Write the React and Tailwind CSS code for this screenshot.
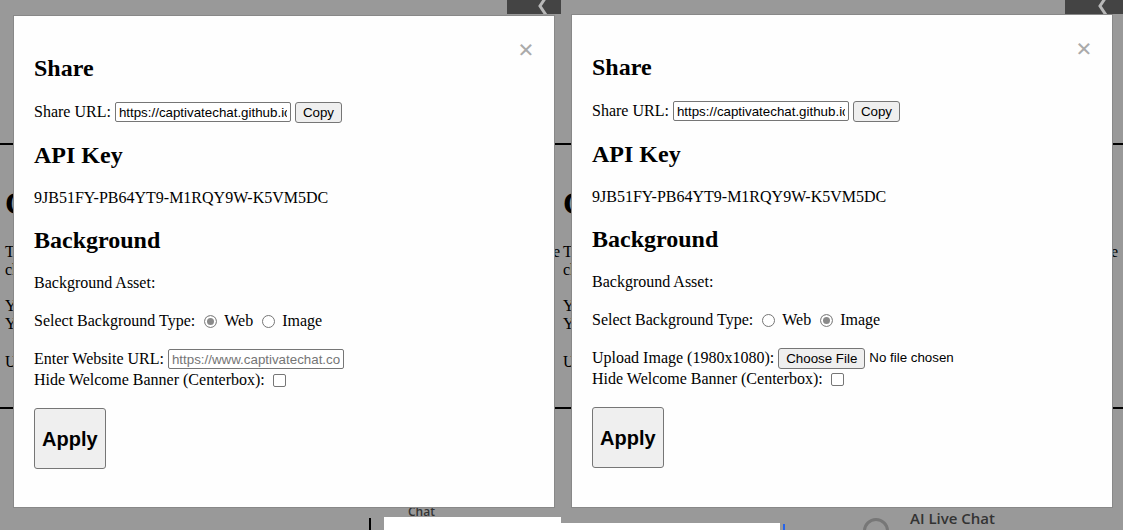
import React from 'react';

const shareUrl = "https://captivatechat.github.io/live-chat?apiKey=9JB51FY-PB64YT9-M1RQY9W-K5VM5DC";

const fieldClass = "h-[20px] w-[176px] shrink-0 rounded-[2px] border border-[#767676] bg-white px-[3px] font-['Liberation_Sans',sans-serif] text-[13.33px] text-black outline-none placeholder:text-[#757575]";
const smallButton = "h-[21px] shrink-0 rounded-[3px] border border-[#767676] bg-[#efefef] px-[7px] font-['Liberation_Sans',sans-serif] text-[13.33px] leading-[15px] text-black";
const radioClass = "h-[13px] w-[13px] shrink-0 appearance-none rounded-full border border-[#767676] bg-white checked:border-[#8a8a8a] checked:bg-[#8a8a8a] checked:shadow-[inset_0_0_0_2px_#fff]";

function Modal({ mode, name, heightClass }) {
  const isImage = mode === 'image';

  return (
    <div className={`${heightClass} w-[542px] border border-[#888] bg-[#fefefe] p-[20px] font-['Liberation_Serif',serif] text-[16px] leading-[18px] text-black`}>
      <span className="float-right cursor-pointer text-[28px] font-bold leading-[28px] text-[#aaa]">×</span>

      <h2 className="mt-[18px] text-[24px] font-bold leading-[28px]">Share</h2>
      <div className="mt-[21px] flex h-[18px] items-center">
        <span>Share URL:</span>
        <input type="text" readOnly value={shareUrl} className={`${fieldClass} ml-[4px]`} />
        <button className={`${smallButton} ml-[4px]`}>Copy</button>
      </div>

      <h2 className="mt-[20px] text-[24px] font-bold leading-[28px]">API Key</h2>
      <p className="mt-[20px]">9JB51FY-PB64YT9-M1RQY9W-K5VM5DC</p>

      <h2 className="mt-[19px] text-[24px] font-bold leading-[28px]">Background</h2>
      <p className="mt-[20px]">Background Asset:</p>

      <div className="mt-[20px] flex h-[18px] items-center">
        <span>Select Background Type:</span>
        <input type="radio" name={name} defaultChecked={!isImage} className={`${radioClass} ml-[9px]`} />
        <span className="ml-[7px]">Web</span>
        <input type="radio" name={name} defaultChecked={isImage} className={`${radioClass} ml-[9px]`} />
        <span className="ml-[7px]">Image</span>
      </div>

      {isImage ? (
        <div className="mt-[20px] flex h-[18px] items-center">
          <span>Upload Image (1980x1080):</span>
          <label className="ml-[4px] flex items-center">
            <span className={`${smallButton} flex h-[20px] items-center`}>Choose File</span>
            <span className="ml-[4px] font-['Liberation_Sans',sans-serif] text-[13.33px]">No file chosen</span>
            <input type="file" className="hidden" />
          </label>
        </div>
      ) : (
        <div className="mt-[20px] flex h-[18px] items-center">
          <span>Enter Website URL:</span>
          <input type="text" placeholder="https://www.captivatechat.com" className={`${fieldClass} ml-[4px]`} />
        </div>
      )}

      <div className="mt-[3px] flex h-[18px] items-center">
        <span>Hide Welcome Banner (Centerbox):</span>
        <input type="checkbox" className="ml-[8px] h-[13px] w-[13px] shrink-0 appearance-none rounded-[2px] border border-[#767676] bg-white" />
      </div>

      <button className="mt-[19px] h-[61px] rounded-[3px] border border-[#767676] bg-[#efefef] px-[7px] font-['Liberation_Sans',sans-serif] text-[20px] font-bold text-black">
        Apply
      </button>
    </div>
  );
}

// page content behind the dimmed overlay, mostly hidden by the modal
function PageBehind({ stripClass, chevronClass, textClass, right }) {
  return (
    <div className="absolute inset-0 flex flex-col font-['Liberation_Serif',serif] text-[16px] leading-[18px] text-black">
      <div className="flex h-[14px] shrink-0">
        <div className="flex-1" />
        <div className={`${stripClass} flex items-start bg-[#444] ${chevronClass}`}>
          <svg width="12" height="14" viewBox="0 0 12 14">
            <path d="M9 -3 L3 6 L9 15" stroke="#b8b8b8" strokeWidth="3" fill="none" />
          </svg>
        </div>
      </div>

      <div className="mt-[129px] h-[2px] shrink-0 bg-black" />

      <div className={`${textClass} shrink-0`}>
        <h1 className="mt-[40px] text-[32px] font-bold leading-[37px]">C</h1>
        <div className="mt-[21px]">
          <div className="flex justify-between">
            <span>To</span>
            <span>the</span>
          </div>
          <div>chat</div>
        </div>
        <div className="mt-[18px]">
          <div>You</div>
          <div>You</div>
        </div>
        <div className="mt-[20px]">Use</div>
      </div>

      <div className="mt-[36px] h-[2px] shrink-0 bg-black" />
      <div className="flex-1" />

      {right ? (
        <div className="flex h-[23px] shrink-0">
          <div className="mt-[16px] w-[219px] bg-white" />
          <div className="ml-[3px] mt-[17px] w-[2px] bg-[#2563eb]" />
          <div className="ml-[78px] mt-[11px] h-[26px] w-[26px] shrink-0 rounded-full border-[3px] border-[#777]" />
          <div className="ml-[21px] mt-[2px] whitespace-nowrap font-['Open_Sans',sans-serif] text-[15px] font-semibold leading-[18px] text-[#333]">AI Live Chat</div>
        </div>
      ) : (
        <div className="flex h-[23px] shrink-0">
          <div className="ml-[369px] mt-[11px] w-[2px] bg-black" />
          <div className="ml-[13px] flex flex-1 flex-col">
            <div className="h-[10px] pl-[24px] font-['Open_Sans',sans-serif] text-[12px] font-semibold leading-[10px] text-[#333]">Chat</div>
            <div className="flex-1 bg-white" />
          </div>
        </div>
      )}
    </div>
  );
}

export default function App() {
  return (
    <div className="flex h-[530px] w-[1123px] overflow-hidden bg-[#999]">
      <div className="relative h-[530px] w-[561px] shrink-0 overflow-hidden bg-[#999]">
        <PageBehind stripClass="w-[54px]" chevronClass="pl-[30px]" textClass="pl-[5px] pr-[1px]" />
        <div className="relative z-10 pl-[13px] pt-[15px]">
          <Modal mode="web" name="bg-left" heightClass="h-[493px]" />
        </div>
      </div>

      <div className="relative h-[530px] w-[562px] shrink-0 overflow-hidden bg-[#999]">
        <PageBehind stripClass="w-[58px]" chevronClass="pl-[32px]" textClass="pl-[2px] pr-[5px]" right />
        <div className="relative z-10 pl-[10px] pt-[14px]">
          <Modal mode="image" name="bg-right" heightClass="h-[494px]" />
        </div>
      </div>
    </div>
  );
}
